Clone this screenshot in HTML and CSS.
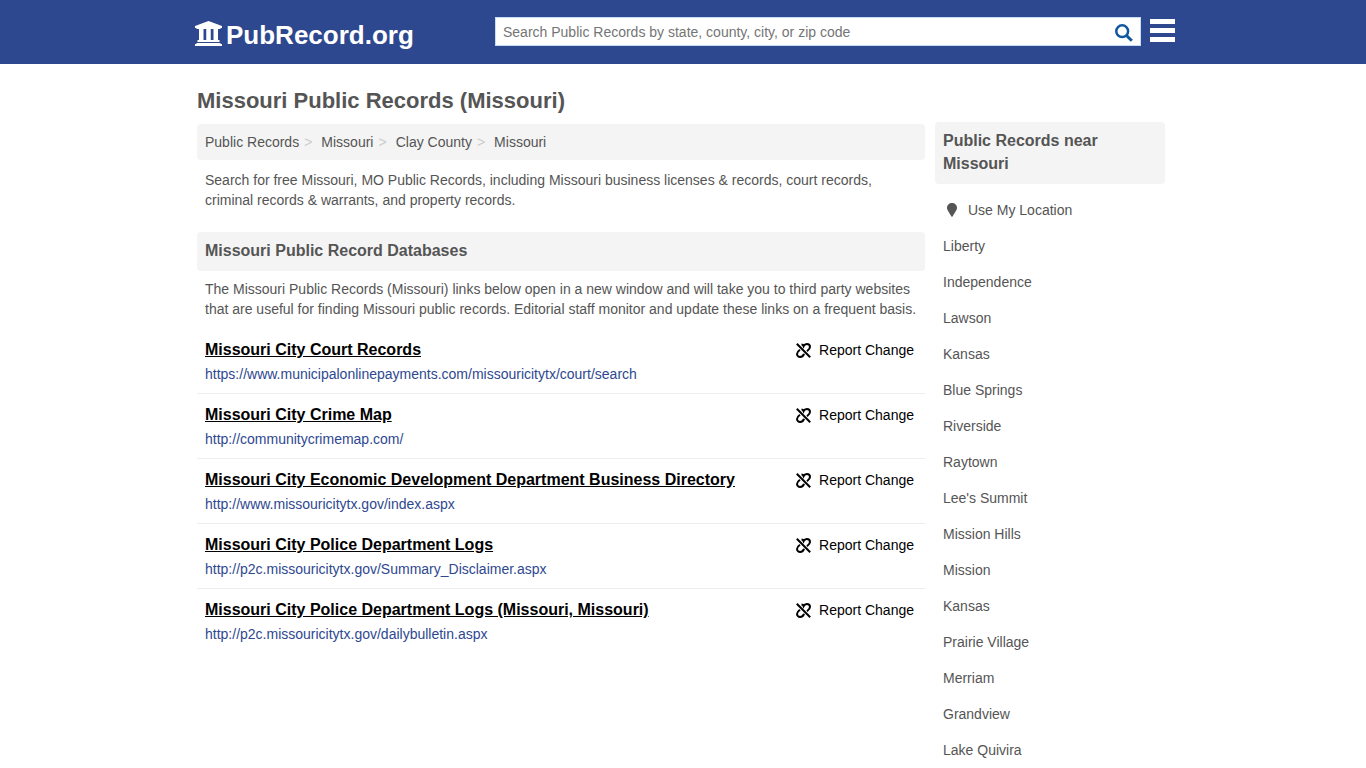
FILE: index.html
```html
<!DOCTYPE html>
<html lang="en">
<head>
  <meta charset="UTF-8">
  <meta name="viewport" content="width=device-width, initial-scale=1.0">
  <title>Missouri Public Records (Missouri)</title>
  <link rel="stylesheet" href="styles.css">
</head>
<body>

  <svg class="sprite" aria-hidden="true">
    <symbol id="unlink" viewBox="0 0 15 15">
      <g fill="none" stroke="currentColor" stroke-width="2">
        <path d="M0.800 0.800L14.200 14.200"/>
        <path d="M5.500 1.600C6.500 1.600 7.300 2.400 7.600 3.200C8.300 1.700 9.500 1 10.800 1C12.600 1 14 2.400 14 4.100C14 5.900 12.900 6.800 11 8.200"/>
        <path d="M4 6.800C2.100 8.200 1 9.200 1 10.900C1 12.600 2.400 14 4.100 14C6 14 7.500 12.800 8 10.800"/>
      </g>
    </symbol>
  </svg>

  <header class="header">
    <div class="header-inner">
      <a class="logo" href="#">
        <svg class="logo-icon" viewBox="0 0 27 25" fill="#fff" aria-hidden="true">
          <path d="M13.5 0L27 5V7H25.5V8H1.5V7H0V5Z"/>
          <path d="M4 8H8.500V19H11.250V8H15.750V19H18.500V8H23V19H24.500V21H2.500V19H4Z"/>
          <path d="M1.500 22H25.500V23H27V25H0V23H1.500Z"/>
        </svg>
        <span>PubRecord.org</span>
      </a>
      <form class="search">
        <input type="text" aria-label="Search Public Records" placeholder="Search Public Records by state, county, city, or zip code">
        <button type="submit" aria-label="Search">
          <svg viewBox="0 0 18 18" width="18" height="18" fill="none" stroke="#1256a0">
            <circle cx="7.200" cy="7.200" r="5.900" stroke-width="2.500"/>
            <path d="M11.500 11.500L16.800 16.800" stroke-width="3"/>
          </svg>
        </button>
      </form>
      <button class="menu" type="button" aria-label="Menu"><i></i><i></i><i></i></button>
    </div>
  </header>

  <div class="container">
    <main class="main">
      <h1>Missouri Public Records (Missouri)</h1>
      <ol class="breadcrumb">
        <li><a href="#">Public Records</a></li>
        <li><a href="#">Missouri</a></li>
        <li><a href="#">Clay County</a></li>
        <li><a href="#">Missouri</a></li>
      </ol>
      <p>Search for free Missouri, MO Public Records, including Missouri business licenses &amp; records, court records, criminal records &amp; warrants, and property records.</p>

      <h2 class="heading">Missouri Public Record Databases</h2>
      <p>The Missouri Public Records (Missouri) links below open in a new window and will take you to third party websites that are useful for finding Missouri public records. Editorial staff monitor and update these links on a frequent basis.</p>

      <ul class="records">
        <li>
          <div>
            <h3><a href="#">Missouri City Court Records</a></h3>
            <a class="url" href="#">https://www.municipalonlinepayments.com/missouricitytx/court/search</a>
          </div>
          <a class="report" href="#"><svg><use href="#unlink"/></svg>Report Change</a>
        </li>
        <li>
          <div>
            <h3><a href="#">Missouri City Crime Map</a></h3>
            <a class="url" href="#">http://communitycrimemap.com/</a>
          </div>
          <a class="report" href="#"><svg><use href="#unlink"/></svg>Report Change</a>
        </li>
        <li>
          <div>
            <h3><a href="#">Missouri City Economic Development Department Business Directory</a></h3>
            <a class="url" href="#">http://www.missouricitytx.gov/index.aspx</a>
          </div>
          <a class="report" href="#"><svg><use href="#unlink"/></svg>Report Change</a>
        </li>
        <li>
          <div>
            <h3><a href="#">Missouri City Police Department Logs</a></h3>
            <a class="url" href="#">http://p2c.missouricitytx.gov/Summary_Disclaimer.aspx</a>
          </div>
          <a class="report" href="#"><svg><use href="#unlink"/></svg>Report Change</a>
        </li>
        <li>
          <div>
            <h3><a href="#">Missouri City Police Department Logs (Missouri, Missouri)</a></h3>
            <a class="url" href="#">http://p2c.missouricitytx.gov/dailybulletin.aspx</a>
          </div>
          <a class="report" href="#"><svg><use href="#unlink"/></svg>Report Change</a>
        </li>
      </ul>
    </main>

    <aside class="sidebar">
      <h2 class="heading">Public Records near Missouri</h2>
      <ul class="nearby">
        <li>
          <a class="location" href="#">
            <svg viewBox="0 0 10 14" fill="currentColor" aria-hidden="true"><path d="M5 0C2.200 0 0 2.100 0 4.800C0 7 1.200 7.800 4.300 13.300Q5 14.300 5.700 13.300C8.800 7.800 10 7 10 4.800C10 2.100 7.800 0 5 0Z"/></svg>
            Use My Location
          </a>
        </li>
        <li><a href="#">Liberty</a></li>
        <li><a href="#">Independence</a></li>
        <li><a href="#">Lawson</a></li>
        <li><a href="#">Kansas</a></li>
        <li><a href="#">Blue Springs</a></li>
        <li><a href="#">Riverside</a></li>
        <li><a href="#">Raytown</a></li>
        <li><a href="#">Lee's Summit</a></li>
        <li><a href="#">Mission Hills</a></li>
        <li><a href="#">Mission</a></li>
        <li><a href="#">Kansas</a></li>
        <li><a href="#">Prairie Village</a></li>
        <li><a href="#">Merriam</a></li>
        <li><a href="#">Grandview</a></li>
        <li><a href="#">Lake Quivira</a></li>
      </ul>
    </aside>
  </div>

</body>
</html>
```
FILE: styles.css
```css
* {
  box-sizing: border-box;
}
body {
  margin: 0;
  font-family: "Liberation Sans", Arial, sans-serif;
  font-size: 14px;
  line-height: 20px;
  color: #555;
  background-color: #fff;
}
h1, h2, h3, p, ul, ol {
  margin: 0;
  padding: 0;
}
ul, ol {
  list-style: none;
}
a {
  color: inherit;
  text-decoration: none;
}
button {
  border: none;
  padding: 0;
  background: none;
  cursor: pointer;
}
.sprite {
  display: none;
}

/* header */
.header {
  background-color: #2e4890;
}
.header-inner {
  display: flex;
  align-items: flex-start;
  max-width: 984px;
  height: 64px;
  margin: 0 auto;
  padding-left: 4px;
}
.logo {
  display: flex;
  gap: 4px;
  width: 300px;
  padding-top: 20px;
  font-size: 26px;
  line-height: 30px;
  font-weight: bold;
  color: #fff;
}
.logo-icon {
  width: 27px;
  height: 25px;
  margin-top: 1px;
}
.search {
  display: flex;
  flex: 1;
  height: 29px;
  margin-top: 17px;
  border: 1px solid #c5dcf5;
  background-color: #fff;
}
.search input {
  flex: 1;
  min-width: 0;
  padding: 0 7px;
  border: none;
  outline: none;
  background: none;
  font: inherit;
}
.search input::placeholder {
  color: #757575;
}
.search button {
  display: flex;
  align-items: center;
  padding: 2px 7px 0;
}
.menu {
  display: flex;
  flex-direction: column;
  gap: 4px;
  width: 25px;
  margin: 19px 0 0 9px;
}
.menu i {
  width: 25px;
  height: 5px;
  background-color: #fff;
}

/* page columns */
.container {
  display: flex;
  align-items: flex-start;
  gap: 10px;
  max-width: 980px;
  margin: 0 auto;
  padding: 20px 8px 0 4px;
}
.main {
  flex: 1;
}
h1 {
  margin-bottom: 6px;
  font-size: 22px;
  line-height: 34px;
}
.main p {
  padding: 0 8px;
}
.breadcrumb {
  display: flex;
  margin-bottom: 10px;
  padding: 8px;
  border-radius: 4px;
  background-color: #f4f4f4;
}
.breadcrumb li:not(:last-child)::after {
  content: ">";
  margin: 0 9px 0 5px;
  color: #ccc;
}
.heading {
  padding: 7px 8px 9px;
  border-radius: 4px;
  background-color: #f4f4f4;
  font-size: 16px;
  line-height: 23px;
}
.main .heading {
  margin: 22px 0 8px;
}

/* record links */
.records {
  margin-top: 10px;
}
.records li {
  display: flex;
  justify-content: space-between;
  padding: 8px 11px 8px 8px;
  border-bottom: 1px solid #eee;
}
.records li:last-child {
  border-bottom: none;
}
.records h3 {
  font-size: 16px;
  line-height: 26px;
  color: #000;
}
.records h3 a {
  text-decoration: underline;
}
.url {
  display: block;
  line-height: 22px;
  color: #2e4890;
}
.report {
  display: flex;
  align-items: center;
  gap: 8px;
  height: 26px;
  color: #000;
}
.report svg {
  width: 15px;
  height: 15px;
}

/* nearby places */
.sidebar {
  width: 230px;
  padding-top: 38px;
}
.nearby {
  margin-top: 8px;
}
.nearby li {
  padding: 8px;
}
.location {
  display: flex;
  align-items: center;
  gap: 11px;
  padding-left: 4px;
}
.location svg {
  width: 10px;
  height: 14px;
}
```
